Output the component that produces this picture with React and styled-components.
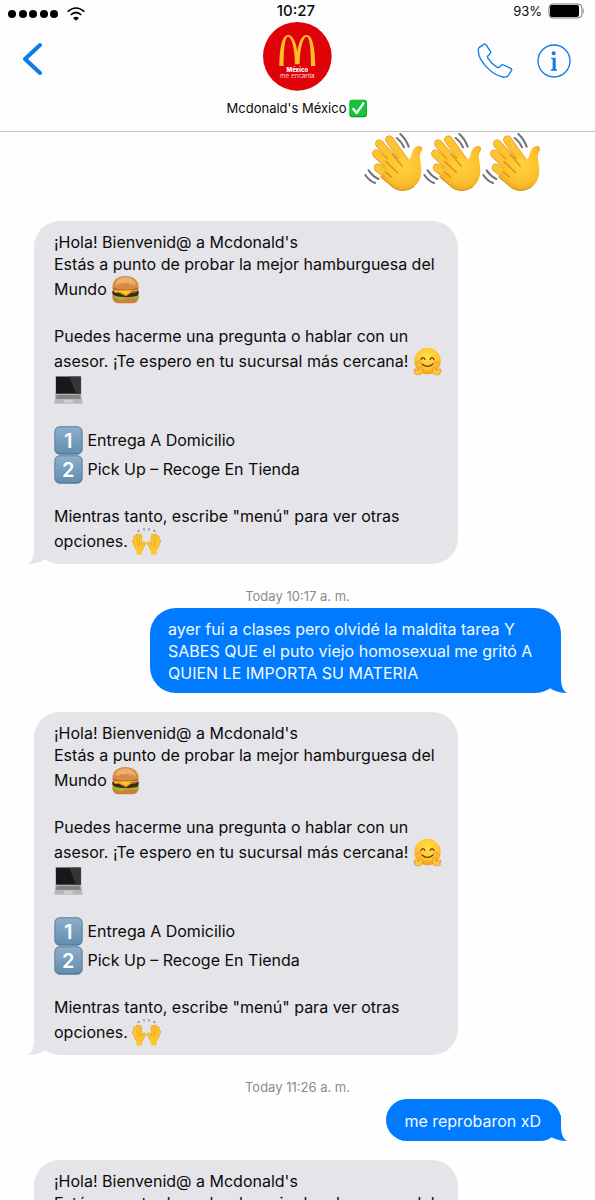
import React from "react";
import styled, { createGlobalStyle } from "styled-components";

const GlobalStyle = createGlobalStyle`
  * {
    box-sizing: border-box;
  }
  body {
    margin: 0;
    background: #fefefe;
    color: #0b0b0c;
    font-family: Inter, "Liberation Sans", sans-serif;
  }
`;

const Phone = styled.div`
  display: flex;
  flex-direction: column;
  height: 100vh;
  overflow: hidden;
`;

const Header = styled.header`
  flex: none;
  background: #fdfdfd;
  border-bottom: 1px solid #c4c4c6;
  padding-bottom: 13px;
`;

const Columns = styled.div`
  display: grid;
  grid-template-columns: 1fr auto 1fr;
`;

const StatusBar = styled(Columns)`
  height: 22px;
  padding: 0 11px 0 8px;
  align-items: center;
  font-size: 13px;
  line-height: 22px;
  svg {
    display: block;
  }
`;

const Signal = styled.div`
  display: flex;
  align-items: center;
  gap: 8px;
  padding-top: 6px;
`;

const Clock = styled.time`
  font-size: 15px;
  font-weight: 500;
`;

const Battery = styled.div`
  display: flex;
  align-items: center;
  justify-content: flex-end;
  gap: 6px;
`;

const NavRow = styled(Columns)`
  align-items: center;
  padding: 0 23px;
`;

const Actions = styled.div`
  display: flex;
  justify-content: flex-end;
  gap: 24px;
  padding-top: 8px;
`;

const IconButton = styled.button`
  display: block;
  justify-self: start;
  padding: 0;
  border: 0;
  background: none;
  color: #0f7be8;
  cursor: pointer;
  svg {
    display: block;
  }
`;

const Title = styled.h1`
  display: flex;
  justify-content: center;
  align-items: center;
  gap: 3px;
  margin: 7px 0 0;
  font-size: 13px;
  font-weight: 400;
  line-height: 20px;
`;

const Avatar = styled.svg`
  display: block;
  width: 69px;
  height: 69px;
`;

const Messages = styled.main`
  flex: 1;
  min-height: 0;
  display: flex;
  flex-direction: column;
  align-items: flex-start;
  padding: 1px 34px 0;
  > * {
    flex: none;
  }
`;

const Waves = styled.div`
  display: flex;
  align-self: flex-end;
  margin: 0 20px 28px 0;
`;

const Stamp = styled.time`
  align-self: center;
  margin: 24px 0 4px;
  color: #8b8b90;
  font-size: 13px;
  line-height: 16px;
`;

const Bubble = styled.div`
  position: relative;
  border-radius: 26px;
  font-size: 16px;
  line-height: 22px;
`;

const Received = styled(Bubble)`
  display: flex;
  flex-direction: column;
  gap: 21px;
  width: 100%;
  max-width: 424px;
  padding: 10px 14px 8px 20px;
  background: #e5e4e9;
`;

const Sent = styled(Bubble)`
  align-self: flex-end;
  display: flex;
  align-items: center;
  width: ${(props) => (props.$long ? "100%" : "auto")};
  min-height: 42px;
  max-width: 411px;
  margin-bottom: 19px;
  padding: 10px 20px 9px 18px;
  background: #007aff;
  color: #f4faff;
`;

const Text = styled.p`
  margin: 0;
`;

const Tail = styled.svg`
  position: absolute;
  bottom: 0;
  left: ${(props) => (props.$right ? "auto" : "-6px")};
  right: ${(props) => (props.$right ? "-6px" : "auto")};
  transform: ${(props) => (props.$right ? "scaleX(-1)" : "none")};
  fill: ${(props) => (props.$right ? "#007aff" : "#e5e4e9")};
`;

const Emoji = styled.svg`
  width: 29px;
  height: 29px;
  vertical-align: -9px;
`;

function BubbleTail({ right }) {
  return (
    <Tail $right={right} width="26" height="26" viewBox="0 0 26 26" aria-hidden="true">
      <path d="M6 0V9C6 17 5 23 0 26C7 26 12 24 16 22L24 10Z" />
    </Tail>
  );
}

function Wave() {
  const fingers = ["M76 20L125 88", "M46 32L105 98", "M37 62L94 116", "M42 104L90 142"];
  return (
    <svg width="59" height="60" viewBox="0 0 177 180" role="img" aria-label="👋">
      <defs>
        <radialGradient id="skin" cx="0.55" cy="0.4" r="0.65">
          <stop offset="0" stopColor="#ffd23c" />
          <stop offset="0.7" stopColor="#fcc02c" />
          <stop offset="1" stopColor="#e9a11c" />
        </radialGradient>
      </defs>
      <g fill="none" strokeLinecap="round">
        {fingers.map((d) => (
          <g key={d}>
            <path d={d} stroke="#d9901b" strokeWidth="25" />
            <path d={d} stroke="#fdc42f" strokeWidth="21" />
          </g>
        ))}
        <path
          d="M98 15Q112 25 120 43M109 3Q126 18 134 41M4 126Q16 144 33 150M14 112Q26 130 43 138"
          stroke="#6d7377"
          strokeWidth="6"
        />
      </g>
      <path
        d="M119 74C127 82 139 80 142 68C145 53 150 41 164 39C174 38 178 47 171 56C165 66 169 83 171 99C174 123 169 146 151 160C132 175 106 176 88 164L49 131L65 111L64 85L86 69L98 79Z"
        fill="url(#skin)"
      />
      <path d="M49 131L88 164C106 176 132 175 151 160" fill="none" stroke="#d18a1b" strokeWidth="3" />
      <path d="M65 85L101 119M85 64L115 100M64 116L82 132" stroke="#d9901b" strokeWidth="4" strokeLinecap="round" />
    </svg>
  );
}

function Burger() {
  return (
    <Emoji viewBox="0 0 87 87" role="img" aria-label="🍔">
      <path d="M4 62H83V68Q80 85 63 85H24Q7 85 4 68Z" fill="#cd803b" />
      <path d="M4 59Q12 66 21 63T40 66T58 65T83 58V66Q75 72 62 70T40 73T17 71T4 66Z" fill="#8fc22e" />
      <path d="M5 46H82Q86 55 80 62Q62 67 43 66Q20 67 7 61Q1 54 5 46Z" fill="#43281b" />
      <path d="M6 43H81L76 50L63 48L45 61L24 50L12 54Z" fill="#ffc928" />
      <path d="M12 50L25 49L44 60L61 49L75 52L61 53L45 64L25 54Z" fill="#f09a18" />
      <path d="M4 39Q4 5 43 3Q83 5 83 39Q82 47 67 46H20Q5 47 4 39Z" fill="#d98b45" />
      <path d="M12 29Q17 8 43 7Q70 8 75 29Q44 19 12 29Z" fill="#eaad68" />
      <path d="M5 38Q43 49 82 38Q82 47 67 46H20Q5 47 5 38Z" fill="#b9652e" />
      <path d="M25 18l5-2M40 12l5 1M56 17l5 3M36 23l5-1M54 27l4 1M20 29l4-2M67 29l4 2" stroke="#f8d6a2" strokeWidth="2" />
    </Emoji>
  );
}

function Hug() {
  return (
    <Emoji viewBox="0 0 90 87" role="img" aria-label="🤗">
      <defs>
        <radialGradient id="face" cx="0.5" cy="0.35" r="0.65">
          <stop offset="0" stopColor="#ffe04a" />
          <stop offset="0.65" stopColor="#ffc62f" />
          <stop offset="1" stopColor="#f09a1d" />
        </radialGradient>
      </defs>
      <circle cx="45" cy="42" r="41" fill="url(#face)" />
      <g fill="none" stroke="#6a3a0b" strokeWidth="4" strokeLinecap="round">
        <path d="M25 37Q31 26 37 37M53 37Q59 26 65 37" />
        <path d="M28 51Q45 66 62 51" />
      </g>
      <ellipse cx="19" cy="46" rx="9" ry="6" fill="#fb943a" opacity="0.5" />
      <ellipse cx="71" cy="46" rx="9" ry="6" fill="#fb943a" opacity="0.5" />
      <g fill="#ffc83d" stroke="#d78c21" strokeWidth="2">
        <path d="M23 59Q27 56 29 62L30 75Q27 85 17 85L7 83Q2 80 8 78L3 75Q0 71 7 72L4 67Q5 64 11 68L19 71Z" />
        <path d="M67 59Q63 56 61 62L60 75Q63 85 73 85L83 83Q88 80 82 78L87 75Q90 71 83 72L86 67Q85 64 79 68L71 71Z" />
      </g>
    </Emoji>
  );
}

function Laptop() {
  return (
    <Emoji viewBox="0 0 87 87" role="img" aria-label="💻">
      <path d="M4 0H82V58H4Z" fill="#a9abad" />
      <path d="M6 2H80V53H6Z" fill="#17181a" />
      <path d="M46 2H80V53H66Z" fill="#333537" />
      <path d="M4 56H82L86 84H1Z" fill="#b4b6b8" />
      <path d="M8 58H78L80 68H6Z" fill="#77797c" />
      <path d="M8 61H78M7 65H79" stroke="#9c9ea1" />
      <path d="M31 71H55L57 80H29Z" fill="#cfd1d3" />
      <path d="M1 83H86V86H1Z" fill="#e6e7e8" />
    </Emoji>
  );
}

function Keycap({ digit }) {
  return (
    <Emoji viewBox="0 0 87 87" role="img" aria-label={`${digit}️⃣`}>
      <defs>
        <linearGradient id="key" x2="0" y2="1">
          <stop offset="0" stopColor="#8caecb" />
          <stop offset="1" stopColor="#638eae" />
        </linearGradient>
      </defs>
      <rect x="1" y="1" width="85" height="85" rx="16" fill="#54799a" />
      <rect x="4" y="4" width="79" height="78" rx="13" fill="url(#key)" />
      <text x="43" y="65" textAnchor="middle" fontSize="60" fontWeight="600" fill="#fff">
        {digit}
      </text>
    </Emoji>
  );
}

function Hand({ flip }) {
  const fingers = "M6 42L15 64M10 30L17 62M18 24L21 60M27 26L26 60M39 49L29 68";
  return (
    <g transform={flip ? "translate(92 0) scale(-1 1)" : undefined} strokeLinecap="round">
      <path d={fingers} stroke="#dc981e" strokeWidth="11" />
      <path d="M12 58H33L32 85H14V72Z" fill="#fdc52e" />
      <path d={fingers} stroke="#fdc52e" strokeWidth="8" />
      <path d="M14 34L20 56M23 28L24 54" stroke="#e3a122" strokeWidth="2" />
    </g>
  );
}

function RaisedHands() {
  return (
    <Emoji viewBox="0 0 92 87" role="img" aria-label="🙌">
      <Hand />
      <Hand flip />
      <path d="M16 13L22 5L25 12ZM34 3L40 1L40 11ZM52 1L58 3L52 11ZM67 12L70 5L76 13Z" fill="#85898c" />
    </Emoji>
  );
}

function Check() {
  return (
    <svg width="19" height="19" viewBox="0 0 57 57" role="img" aria-label="✅">
      <rect x="1" y="2" width="53" height="53" rx="9" fill="#0b9b2e" />
      <rect x="3" y="3" width="49" height="48" rx="8" fill="#12c53b" />
      <path d="M13 30L23 42L43 13" fill="none" stroke="#fff" strokeWidth="7" strokeLinecap="round" strokeLinejoin="round" />
    </svg>
  );
}

function Logo() {
  return (
    <Avatar viewBox="0 0 207 207" role="img" aria-label="Mcdonald's México">
      <circle cx="103" cy="103" r="103" fill="#df0209" />
      <path
        d="M49 132C50 82 56 39 75 39C90 39 100 62 103 90C106 62 116 39 131 39C150 39 156 82 157 132H144C144 83 140 44 131 44C120 44 110 82 110 127H96C96 82 86 44 75 44C66 44 62 83 62 132Z"
        fill="#ffbc2b"
      />
      <text x="103" y="150" textAnchor="middle" fontSize="18" fontWeight="800" fill="#fff">
        México
      </text>
      <text x="103" y="168" textAnchor="middle" fontSize="19" fontWeight="300" fill="#fff">
        me encanta
      </text>
    </Avatar>
  );
}

function Welcome() {
  return (
    <Received>
      <Text>
        ¡Hola! Bienvenid@ a Mcdonald's
        <br />
        Estás a punto de probar la mejor hamburguesa del
        <br />
        Mundo <Burger />
      </Text>
      <Text>
        Puedes hacerme una pregunta o hablar con un
        <br />
        asesor. ¡Te espero en tu sucursal más cercana! <Hug />
        <br />
        <Laptop />
      </Text>
      <Text>
        <Keycap digit="1" /> Entrega A Domicilio
        <br />
        <Keycap digit="2" /> Pick Up – Recoge En Tienda
      </Text>
      <Text>
        Mientras tanto, escribe "menú" para ver otras
        <br />
        opciones. <RaisedHands />
      </Text>
      <BubbleTail />
    </Received>
  );
}

export default function App() {
  return (
    <Phone>
      <GlobalStyle />
      <Header>
        <StatusBar>
          <Signal>
            <svg width="51" height="8" viewBox="0 0 51 8" aria-hidden="true">
              {[4, 15, 25, 36, 46].map((x) => (
                <circle key={x} cx={x} cy="4" r="4" />
              ))}
            </svg>
            <svg width="18" height="14" viewBox="0 0 54 42" fill="none" stroke="#000" strokeWidth="5" aria-label="Wi-Fi">
              <path d="M2 14Q27 -8 52 14M11 24Q27 9 43 24" />
              <path d="M18 33Q27 25 36 33L27 41Z" fill="#000" stroke="none" />
            </svg>
          </Signal>
          <Clock>10:27</Clock>
          <Battery>
            93%
            <svg width="36" height="16" viewBox="0 0 36 16" aria-hidden="true">
              <rect x="1" y="1" width="33" height="14" rx="4" fill="#fff" stroke="#77777a" />
              <rect x="2" y="2" width="29" height="12" rx="2" />
              <path d="M35 5Q37 8 35 11" fill="#999" />
            </svg>
          </Battery>
        </StatusBar>
        <NavRow>
          <IconButton aria-label="Back">
            <svg width="21" height="36" viewBox="0 0 21 36" fill="none" stroke="currentColor" strokeWidth="4" strokeLinecap="round" strokeLinejoin="round">
              <path d="M17 6L2 20L17 34" />
            </svg>
          </IconButton>
          <Logo />
          <Actions>
            <IconButton aria-label="Call">
              <svg width="36" height="36" viewBox="0 0 108 108" fill="none" stroke="currentColor" strokeWidth="4" strokeLinejoin="round">
                <path d="M7 13L20 4Q24 1 27 5L40 25Q42 29 39 32L33 38Q30 41 33 46Q43 62 61 73Q65 75 68 72L73 67Q76 64 80 66L101 76Q106 79 103 83L95 96Q91 104 78 102C44 97 4 52 4 24Q3 17 7 13Z" />
              </svg>
            </IconButton>
            <IconButton aria-label="Info">
              <svg width="35" height="34" viewBox="0 0 105 102">
                <circle cx="51" cy="51" r="48" fill="none" stroke="currentColor" strokeWidth="4" />
                <circle cx="50" cy="28" r="6" fill="currentColor" />
                <path d="M42 41H56V74L60 77V80H41V77L47 74V46L42 44Z" fill="currentColor" />
              </svg>
            </IconButton>
          </Actions>
        </NavRow>
        <Title>
          Mcdonald's México
          <Check />
        </Title>
      </Header>
      <Messages>
        <Waves>
          <Wave />
          <Wave />
          <Wave />
        </Waves>
        <Welcome />
        <Stamp>Today 10:17 a. m.</Stamp>
        <Sent $long>
          <Text>
            ayer fui a clases pero olvidé la maldita tarea Y
            <br />
            SABES QUE el puto viejo homosexual me gritó A
            <br />
            QUIEN LE IMPORTA SU MATERIA
          </Text>
          <BubbleTail right />
        </Sent>
        <Welcome />
        <Stamp>Today 11:26 a. m.</Stamp>
        <Sent>
          <Text>me reprobaron xD</Text>
          <BubbleTail right />
        </Sent>
        <Welcome />
      </Messages>
    </Phone>
  );
}
